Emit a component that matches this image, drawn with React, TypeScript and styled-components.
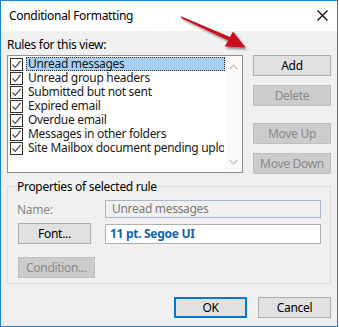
import styled, { createGlobalStyle } from "styled-components";

const GlobalStyle = createGlobalStyle`
  html, body {
    margin: 0;
    padding: 0;
    background: #ffffff;
  }
  body {
    font-family: "Noto Sans", "Liberation Sans", sans-serif;
    font-size: 12px;
    letter-spacing: -0.3px;
    color: #000000;
  }
`;

const rules = [
  "Unread messages",
  "Unread group headers",
  "Submitted but not sent",
  "Expired email",
  "Overdue email",
  "Messages in other folders",
  "Site Mailbox document pending upload",
];

// The Outlook "Conditional Formatting" dialog, with a red call-out arrow on the Add button
export default function App() {
  return (
    <>
      <GlobalStyle />
      <Window>
        <TitleBar>
          <Title>Conditional Formatting</Title>
          <CloseIcon width="11" height="11" viewBox="0 0 11 11">
            <path d="M0.5 0.5 L10.5 10.5 M10.5 0.5 L0.5 10.5" stroke="#000" strokeWidth="1.1" />
          </CloseIcon>
        </TitleBar>
        <Body>
          <RulesSection>
            <RulesColumn>
              <Label>Rules for this view:</Label>
              <ListBox>
                <Rows>
                  {rules.map((rule, index) => (
                    <Row key={rule}>
                      <CheckBox>
                        <svg width="11" height="11" viewBox="0 0 11 11">
                          <path d="M1.5 5.5 L4.2 8.3 L9.6 2" fill="none" stroke="#4a4a4a" strokeWidth="1.2" />
                        </svg>
                      </CheckBox>
                      <RowText selected={index === 0}>{rule}</RowText>
                    </Row>
                  ))}
                </Rows>
                <ScrollBar>
                  <svg width="9" height="6" viewBox="0 0 9 6">
                    <path d="M0.5 5 L4.5 1 L8.5 5" fill="none" stroke="#c2c2c2" strokeWidth="1.2" />
                  </svg>
                  <svg width="9" height="6" viewBox="0 0 9 6">
                    <path d="M0.5 1 L4.5 5 L8.5 1" fill="none" stroke="#c2c2c2" strokeWidth="1.2" />
                  </svg>
                </ScrollBar>
              </ListBox>
            </RulesColumn>
            <ButtonColumn>
              <SideButton>Add</SideButton>
              <SideButton disabled>Delete</SideButton>
              <SideButton disabled gapAbove>Move Up</SideButton>
              <SideButton disabled>Move Down</SideButton>
            </ButtonColumn>
          </RulesSection>

          <Group>
            <Legend>Properties of selected rule</Legend>
            <FieldGrid>
              <FieldLabel>Name:</FieldLabel>
              <NameBox>Unread messages</NameBox>
              <Button>Font...</Button>
              <FontBox>11 pt. Segoe UI</FontBox>
              <ConditionButton disabled>Condition...</ConditionButton>
            </FieldGrid>
          </Group>

          <Footer>
            <Button primary>OK</Button>
            <Button>Cancel</Button>
          </Footer>
        </Body>

        <Arrow width="339" height="60" viewBox="0 0 339 60">
          <defs>
            <filter id="shade" x="-20%" y="-40%" width="140%" height="180%">
              <feDropShadow dx="1.5" dy="2" stdDeviation="1.2" floodColor="#000" floodOpacity="0.45" />
            </filter>
          </defs>
          <g filter="url(#shade)" fill="#c8101a">
            <path d="M180.5 16 L182 18.6 L230.6 41.5 L232.2 37.9 Z" />
            <path d="M245.5 47.5 L224.8 46.6 L233 31.5 Z" />
          </g>
        </Arrow>
      </Window>
    </>
  );
}

const Window = styled.div`
  position: relative;
  box-sizing: border-box;
  width: 338px;
  height: 327px;
  border: 1px solid #1883d7;
  background: #f0f0f0;
  display: flex;
  flex-direction: column;
`;

const TitleBar = styled.div`
  height: 30px;
  background: #ffffff;
  display: flex;
  align-items: center;
  justify-content: space-between;
  padding: 0 9px 0 8px;
`;

const Title = styled.span`
  font-size: 12px;
  margin-top: -1px;
`;

const CloseIcon = styled.svg`
  margin-top: -1px;
`;

const Body = styled.div`
  flex: 1;
  display: flex;
  flex-direction: column;
  padding: 6px 6px 8px 6px;
`;

const RulesSection = styled.div`
  display: flex;
  gap: 10px;
`;

const RulesColumn = styled.div`
  width: 236px;
  display: flex;
  flex-direction: column;
`;

const Label = styled.div`
  height: 16px;
  line-height: 16px;
  margin-bottom: 2px;
`;

const ListBox = styled.div`
  box-sizing: border-box;
  height: 118px;
  border: 1px solid #8f8f8f;
  background: #ffffff;
  display: flex;
  overflow: hidden;
`;

const Rows = styled.div`
  flex: 1;
  min-width: 0;
  padding: 1px 0 0 2px;
`;

const Row = styled.div`
  display: flex;
  align-items: center;
  height: 14px;
  white-space: nowrap;
`;

const CheckBox = styled.span`
  box-sizing: border-box;
  flex: none;
  width: 13px;
  height: 13px;
  border: 1px solid #333333;
  background: #ffffff;
  display: flex;
  align-items: center;
  justify-content: center;
  margin-right: 3px;
`;

const RowText = styled.span<{ selected: boolean }>`
  flex: 1;
  min-width: 0;
  box-sizing: border-box;
  height: 14px;
  line-height: 12px;
  padding: 0 1px;
  overflow-x: clip;
  overflow-y: visible;
  color: #1a1a1a;
  background: ${(props) => (props.selected ? "#a8d0f3" : "transparent")};
  border: 1px dotted ${(props) => (props.selected ? "#2a2a2a" : "transparent")};
`;

const ScrollBar = styled.div`
  flex: none;
  width: 17px;
  background: #fafafa;
  display: flex;
  flex-direction: column;
  align-items: center;
  justify-content: space-between;
  padding: 8px 0 7px;
`;

const ButtonColumn = styled.div`
  width: 78px;
  padding-top: 18px;
  display: flex;
  flex-direction: column;
  gap: 9px;
`;

const Button = styled.button<{ primary?: boolean }>`
  box-sizing: border-box;
  width: 73px;
  height: 21px;
  padding: 0;
  font-family: "Noto Sans", "Liberation Sans", sans-serif;
  font-size: 12px;
  letter-spacing: -0.3px;
  color: #000000;
  background: #e1e1e1;
  border: ${(props) => (props.primary ? "2px solid #0078d7" : "1px solid #adadad")};
  border-radius: 0;

  &:disabled {
    background: #cccccc;
    border-color: #bfbfbf;
    color: #8a8a8a;
  }
`;

const SideButton = styled(Button)<{ gapAbove?: boolean }>`
  width: 78px;
  margin-top: ${(props) => (props.gapAbove ? "8px" : "0")};
`;

const ConditionButton = styled(Button)`
  width: 77px;
  margin-top: 8px;
`;

const Group = styled.fieldset`
  margin: 5px 0 0 0;
  padding: 6px 9px 5px 9px;
  border: 1px solid #dcdcdc;
  min-width: 0;
`;

const Legend = styled.legend`
  padding: 0 1px 0 0;
  line-height: 15px;
`;

const FieldGrid = styled.div`
  display: grid;
  grid-template-columns: 73px 1fr;
  column-gap: 14px;
  row-gap: 5px;
  align-items: center;
  padding-left: 1px;
`;

const FieldLabel = styled.div`
  color: #8a8a8a;
  margin-left: -1px;
`;

const NameBox = styled.div`
  box-sizing: border-box;
  height: 18px;
  line-height: 15px;
  padding: 0 6px;
  border: 1px solid #a9b9c9;
  color: #7a7a7a;
  background: #f0f0f0;
`;

const FontBox = styled.div`
  box-sizing: border-box;
  height: 20px;
  line-height: 17px;
  padding: 0 4px;
  border: 1px solid #b0b0b0;
  background: #ffffff;
  color: #0f62b5;
  font-weight: bold;
`;

const Footer = styled.div`
  margin-top: auto;
  display: flex;
  justify-content: flex-end;
  gap: 11px;
`;

const Arrow = styled.svg`
  position: absolute;
  left: -1px;
  top: -1px;
  pointer-events: none;
`;
